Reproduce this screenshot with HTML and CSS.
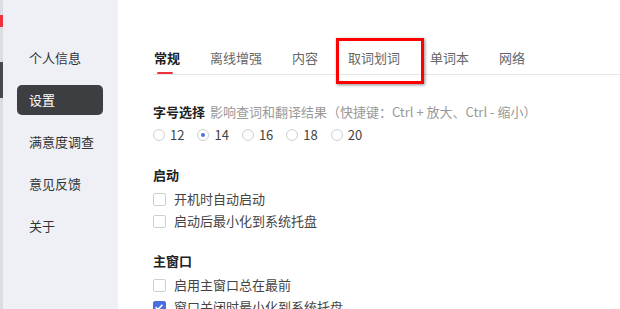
FILE: index.html
```html
<!DOCTYPE html>
<html lang="zh-CN">
    <head>
        <meta charset="utf-8">
        <title>设置</title>
        <link rel="stylesheet" href="styles.css">
    </head>
    <body>
        <div class="edge">
            <span class="edge-logo"></span>
            <span class="edge-bar"></span>
        </div>
        <nav class="sidebar">
            <div class="side-item">个人信息</div>
            <div class="side-item active">设置</div>
            <div class="side-item">满意度调查</div>
            <div class="side-item">意见反馈</div>
            <div class="side-item">关于</div>
        </nav>
        <div class="main">
            <div class="tabs">
                <div class="tab active">常规</div>
                <div class="tab">离线增强</div>
                <div class="tab">内容</div>
                <div class="tab marked">取词划词</div>
                <div class="tab">单词本</div>
                <div class="tab">网络</div>
            </div>

            <h3 class="title first">字号选择 <span class="hint">影响查词和翻译结果（快捷键：Ctrl + 放大、Ctrl - 缩小）</span></h3>
            <div class="radios">
                <label class="radio"><span class="dot"></span>12</label>
                <label class="radio on"><span class="dot"></span>14</label>
                <label class="radio"><span class="dot"></span>16</label>
                <label class="radio"><span class="dot"></span>18</label>
                <label class="radio"><span class="dot"></span>20</label>
            </div>

            <h3 class="title">启动</h3>
            <label class="check"><span class="box"></span>开机时自动启动</label>
            <label class="check"><span class="box"></span>启动后最小化到系统托盘</label>

            <h3 class="title">主窗口</h3>
            <label class="check"><span class="box"></span>启用主窗口总在最前</label>
            <label class="check on"><span class="box">
                <svg width="12" height="12" viewBox="0 0 12 12"><path d="M2.6 6.2 5 8.5 9.4 3.8" fill="none" stroke="#fff" stroke-width="1.6"/></svg>
            </span>窗口关闭时最小化到系统托盘</label>
        </div>
    </body>
</html>
```

FILE: styles.css
```css
html, body { height: 100%; }
body {
    margin: 0;
    display: flex;
    overflow: hidden;
    background: #fff;
    font-family: "Noto Sans CJK SC", "DejaVu Sans", sans-serif;
    font-size: 13px;
    color: #333;
}

.edge {
    width: 3px;
    background: #dcdde2;
    display: flex;
    flex-direction: column;
}
.edge-logo {
    margin-top: 15px;
    height: 12px;
    background: #f0323c;
}
.edge-bar {
    margin-top: 35px;
    height: 36px;
    background: #48484c;
}

.sidebar {
    width: 115px;
    background: #eef0f5;
    padding-top: 43px;
    display: flex;
    flex-direction: column;
    gap: 12px;
}
.side-item {
    margin-left: 14px;
    width: 74px;
    height: 30px;
    line-height: 30px;
    padding-left: 12px;
    border-radius: 5px;
    color: #333;
}
.side-item.active {
    background: #3d3e42;
    color: #fff;
}

.main {
    flex: 1;
    padding-left: 35px;
}

.tabs {
    margin-top: 48px;
    padding-left: 1px;
    display: flex;
    gap: 30px;
    border-bottom: 1px solid #e6e6e6;
}
.tab {
    position: relative;
    line-height: 20px;
    padding-bottom: 6px;
    color: #666;
}
.tab.active {
    color: #222;
    font-weight: bold;
    padding-bottom: 0;
}
.tab.active::after {
    content: "";
    display: block;
    margin: 4px 0 0 3px;
    width: 16px;
    height: 2px;
    border-radius: 1px;
    background: #f0323c;
}
.tab.marked::before {
    content: "";
    position: absolute;
    left: -12px;
    top: -10px;
    width: 82px;
    height: 40px;
    border: 3px solid #f00;
    box-shadow: 1px 1px 3px rgba(0, 0, 0, 0.45);
}

.title {
    margin: 20px 0 0;
    font-size: 13px;
    line-height: 20px;
    font-weight: bold;
    color: #222;
}
.title.first { margin-top: 27px; }
.hint {
    margin-left: 2px;
    font-weight: normal;
    color: #999;
}

.radios {
    margin-top: 3px;
    display: flex;
    gap: 13px;
}
.radio {
    display: flex;
    align-items: center;
    gap: 5px;
    line-height: 20px;
    color: #444;
}
.dot {
    width: 10px;
    height: 10px;
    border: 1px solid #cfcfcf;
    border-radius: 50%;
    display: flex;
    align-items: center;
    justify-content: center;
}
.radio.on .dot::after {
    content: "";
    width: 4px;
    height: 4px;
    border-radius: 50%;
    background: #4a6ee0;
}

.check {
    margin-top: 2px;
    display: flex;
    align-items: center;
    gap: 8px;
    line-height: 20px;
    color: #444;
}
.title + .check { margin-top: 4px; }
.box {
    width: 11px;
    height: 11px;
    border: 1px solid #cfcfcf;
    border-radius: 2px;
    display: flex;
}
.check.on .box {
    background: #4a6ee0;
    border-color: #4a6ee0;
}
.box svg { margin: -1px; }
```
